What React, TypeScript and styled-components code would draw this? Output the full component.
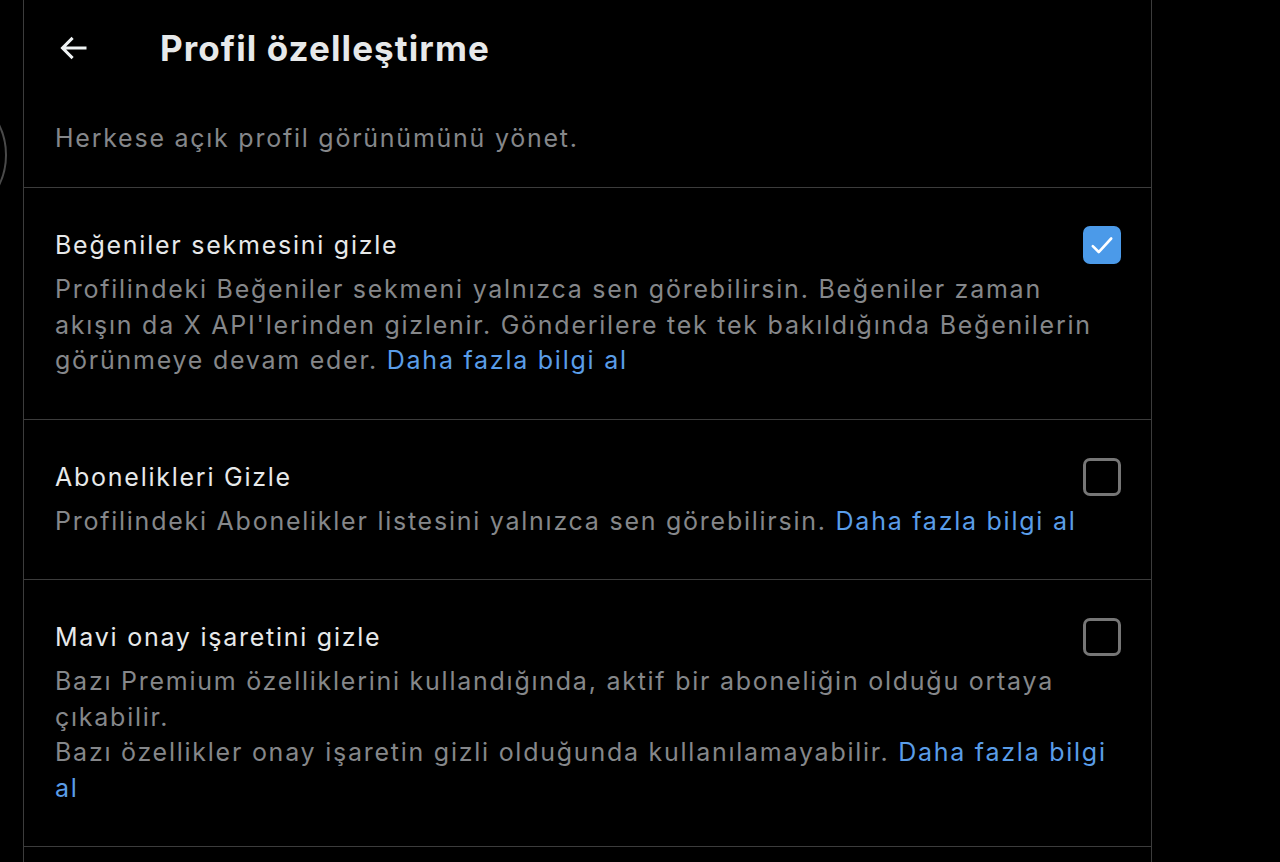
import { createGlobalStyle, styled } from "styled-components";

const GlobalStyle = createGlobalStyle`
  html, body {
    margin: 0;
    padding: 0;
    background: #000;
  }
  body {
    font-family: Inter, "Noto Sans", "DejaVu Sans", sans-serif;
    color: #e7e9ea;
  }
`;

const Page = styled.div`
  display: flex;
  min-height: 100vh;
  background: #000;
  overflow: hidden;
`;

const Sidebar = styled.div`
  width: 23px;
  flex-shrink: 0;
  overflow: hidden;
  padding-top: 87px;
`;

const SideCircle = styled.div`
  width: 136px;
  height: 136px;
  margin-left: -129px;
  border: 2px solid #4a4a4a;
  border-radius: 50%;
  box-sizing: border-box;
`;

const Main = styled.main`
  width: 1129px;
  flex-shrink: 0;
  border-left: 1px solid #3c3c3c;
  border-right: 1px solid #3c3c3c;
  box-sizing: border-box;
`;

const Header = styled.header`
  display: flex;
  align-items: center;
  height: 96px;
  padding-left: 31px;
  gap: 69px;
`;

const BackButton = styled.button`
  display: flex;
  align-items: center;
  justify-content: center;
  width: 36px;
  height: 36px;
  padding: 0;
  border: 0;
  background: transparent;
  color: #eff3f4;
  cursor: pointer;
`;

const Title = styled.h1`
  margin: 0;
  font-size: 35px;
  font-weight: 700;
  letter-spacing: 1.1px;
  color: #e7e9ea;
`;

const Intro = styled.p`
  margin: 0;
  padding: 24px 31px 31px;
  font-size: 25px;
  line-height: 36px;
  letter-spacing: 1.75px;
  color: #85878a;
  border-bottom: 1px solid #3c3c3c;
`;

const Section = styled.section`
  padding: 39px 30px 40px 31px;
  border-bottom: 1px solid #3c3c3c;
`;

const LabelRow = styled.div`
  display: flex;
  align-items: center;
  justify-content: space-between;
  height: 36px;
  margin-bottom: 9px;
`;

const Label = styled.span`
  font-size: 25px;
  line-height: 36px;
  letter-spacing: 1.75px;
  color: #e7e9ea;
`;

const Box = styled.span<{ $checked?: boolean }>`
  display: flex;
  align-items: center;
  justify-content: center;
  width: 38px;
  height: 38px;
  box-sizing: border-box;
  border-radius: 7px;
  border: ${(p) => (p.$checked ? "0" : "3px solid #767676")};
  background: ${(p) => (p.$checked ? "#4b9ae9" : "transparent")};
`;

const Desc = styled.p`
  margin: 0;
  font-size: 25px;
  line-height: 35.5px;
  letter-spacing: 1.75px;
  color: #85878a;
`;

const Link = styled.a`
  color: #5a9de8;
  text-decoration: none;
`;

function Check({ checked }: { checked?: boolean }) {
  return (
    <Box $checked={checked}>
      {checked ? (
        <svg width="26" height="26" viewBox="0 0 24 24" fill="none">
          <path
            d="M3.5 13l5.5 5.5L20.5 6"
            stroke="#fff"
            strokeWidth="2.4"
            strokeLinecap="round"
            strokeLinejoin="round"
          />
        </svg>
      ) : null}
    </Box>
  );
}

const settings = [
  {
    label: "Beğeniler sekmesini gizle",
    checked: true,
    text: [
      "Profilindeki Beğeniler sekmeni yalnızca sen görebilirsin. Beğeniler zaman akışın da X API'lerinden gizlenir. Gönderilere tek tek bakıldığında Beğenilerin görünmeye devam eder.",
    ],
  },
  {
    label: "Abonelikleri Gizle",
    checked: false,
    text: ["Profilindeki Abonelikler listesini yalnızca sen görebilirsin."],
  },
  {
    label: "Mavi onay işaretini gizle",
    checked: false,
    text: [
      "Bazı Premium özelliklerini kullandığında, aktif bir aboneliğin olduğu ortaya çıkabilir.",
      "Bazı özellikler onay işaretin gizli olduğunda kullanılamayabilir.",
    ],
  },
];

export default function App() {
  return (
    <>
      <GlobalStyle />
      <Page>
        <Sidebar>
          <SideCircle />
        </Sidebar>
        <Main>
          <Header>
            <BackButton aria-label="Geri">
              <svg width="36" height="36" viewBox="0 0 24 24" fill="currentColor">
                <path d="M7.414 13l5.043 5.04-1.414 1.42L3.586 12l7.457-7.46 1.414 1.42L7.414 11H21v2H7.414z" />
              </svg>
            </BackButton>
            <Title>Profil özelleştirme</Title>
          </Header>
          <Intro>Herkese açık profil görünümünü yönet.</Intro>
          {settings.map((s) => (
            <Section key={s.label}>
              <LabelRow>
                <Label>{s.label}</Label>
                <Check checked={s.checked} />
              </LabelRow>
              <Desc>
                {s.text.map((t, i) => (
                  <span key={i}>
                    {i > 0 ? <br /> : null}
                    {t}
                  </span>
                ))}{" "}
                <Link href="#">Daha fazla bilgi al</Link>
              </Desc>
            </Section>
          ))}
        </Main>
      </Page>
    </>
  );
}
